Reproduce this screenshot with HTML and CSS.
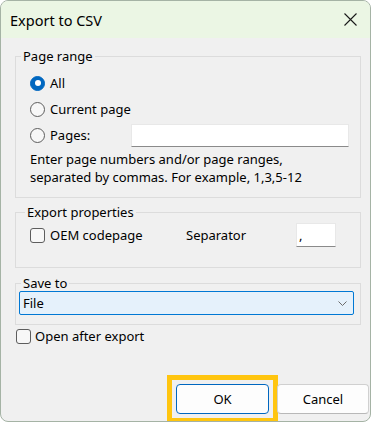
FILE: index.html
```html
<!DOCTYPE html>
<html lang="en">
<head>
<meta charset="UTF-8">
<title>Export to CSV</title>
<link rel="stylesheet" href="styles.css">
</head>
<body>
  <div class="window">
    <div class="titlebar">
      <span class="title">Export to CSV</span>
      <svg class="close" width="13" height="13" viewBox="0 0 13 13">
        <path d="M0.5 0.5 L12.5 12.5 M12.5 0.5 L0.5 12.5" stroke="#1a1a1a" stroke-width="1.1" fill="none"/>
      </svg>
    </div>

    <div class="content">
      <fieldset class="group range">
        <legend>Page range</legend>
        <div class="row">
          <span class="radio checked"></span>
          <span>All</span>
        </div>
        <div class="row">
          <span class="radio"></span>
          <span>Current page</span>
        </div>
        <div class="row">
          <span class="radio"></span>
          <span>Pages:</span>
          <span class="textbox pages"></span>
        </div>
        <p class="hint">Enter page numbers and/or page ranges,<br>separated by commas. For example, 1,3,5-12</p>
      </fieldset>

      <fieldset class="group props">
        <legend>Export properties</legend>
        <div class="row">
          <span class="oem">
            <span class="check"></span>
            <span>OEM codepage</span>
          </span>
          <span class="sep-label">Separator</span>
          <span class="textbox sep">,</span>
        </div>
      </fieldset>

      <fieldset class="group save">
        <legend>Save to</legend>
        <div class="select">
          <span>File</span>
          <svg width="9" height="5" viewBox="0 0 9 5">
            <path d="M0.5 0.5 L4.5 4.5 L8.5 0.5" stroke="#6b6b6b" stroke-width="1" fill="none"/>
          </svg>
        </div>
      </fieldset>

      <div class="open-row">
        <span class="check"></span>
        <span>Open after export</span>
      </div>
    </div>

    <div class="footer">
      <span class="highlight">
        <button class="button default">OK</button>
      </span>
      <button class="button">Cancel</button>
    </div>
  </div>
</body>
</html>
```

FILE: styles.css
```css
body {
  margin: 0;
  padding: 0;
  background-color: #ffffff;
  font-family: "Noto Sans", Arial, sans-serif;
  font-size: 13px;
  color: #000;
}
.window {
  width: 371px;
  height: 422px;
  box-sizing: border-box;
  border: 1px solid #a5b3a5;
  border-radius: 8px;
  background-color: #f0f0f0;
  overflow: hidden;
  display: flex;
  flex-direction: column;
}
.titlebar {
  height: 37px;
  flex: none;
  background-color: #ebf6e4;
  display: flex;
  align-items: center;
  justify-content: space-between;
  padding: 0 13px 0 9px;
}
.title {
  font-size: 14.5px;
}
.content {
  padding: 9px 9px 0 14px;
}
.group {
  margin: 0;
  min-width: 0;
  border: 1px solid #dcdcdc;
}
.group legend {
  padding: 0 2px;
  margin-left: -2px;
  line-height: 18px;
}
.range {
  padding: 5px 11px 11px 7px;
}
.row {
  height: 26px;
  display: flex;
  align-items: center;
  gap: 5px;
  margin-left: 7px;
}
.radio {
  width: 13px;
  height: 13px;
  border: 1px solid #5d5d5d;
  border-radius: 50%;
  background-color: #f7f7f7;
  box-sizing: content-box;
  position: relative;
  flex: none;
}
.radio.checked {
  border-color: #0067c0;
  background-color: #0067c0;
}
.radio.checked::after {
  content: "";
  position: absolute;
  left: 3.5px;
  top: 3.5px;
  width: 6px;
  height: 6px;
  border-radius: 50%;
  background-color: #fff;
}
.textbox {
  display: block;
  box-sizing: border-box;
  background-color: #fff;
  border: 1px solid #e8e8e8;
  border-bottom-color: #8a8a8a;
}
.pages {
  width: 218px;
  height: 23px;
  margin-left: auto;
}
.hint {
  margin: 2px 0 0 7px;
  line-height: 18px;
}
.props {
  margin-top: 5px;
  padding: 2px 11px 20px 7px;
}
.props legend {
  margin-left: 2px;
}
.props .row {
  height: 24px;
  gap: 0;
}
.oem {
  width: 156px;
  display: flex;
  align-items: center;
  gap: 5px;
}
.sep-label {
  width: 110px;
}
.sep {
  width: 40px;
  height: 24px;
  line-height: 22px;
  padding-left: 2px;
}
.check {
  width: 13px;
  height: 13px;
  border: 1px solid #5d5d5d;
  border-radius: 3px;
  background-color: #f7f7f7;
  flex: none;
}
.save {
  margin-top: 7px;
  padding: 0 6px 9px 3px;
}
.save legend {
  margin-left: 2px;
  line-height: 16px;
}
.select {
  height: 24px;
  box-sizing: border-box;
  border: 1px solid #0078d4;
  border-radius: 2px;
  background-color: #e5f1fb;
  display: flex;
  align-items: center;
  justify-content: space-between;
  padding: 0 6px 0 3px;
}
.open-row {
  margin: 2px 0 0 1px;
  display: flex;
  align-items: center;
  gap: 4px;
}
.footer {
  margin-top: auto;
  display: flex;
  align-items: center;
  justify-content: flex-end;
  padding: 0 0 7px 0;
  margin-right: 1px;
}
.highlight {
  display: block;
  border: 5px solid #ffc50f;
  padding: 4px;
  margin: -9px -1px -9px 0;
  line-height: 0;
}
.button {
  width: 92px;
  height: 30px;
  font-family: "Noto Sans", Arial, sans-serif;
  font-size: 13px;
  color: #000;
  background-color: #fdfdfd;
  border: 1px solid #d0d0d0;
  border-bottom-color: #b8b8b8;
  border-radius: 4px;
}
.button.default {
  width: 93px;
  border-color: #0067c0;
}
```
